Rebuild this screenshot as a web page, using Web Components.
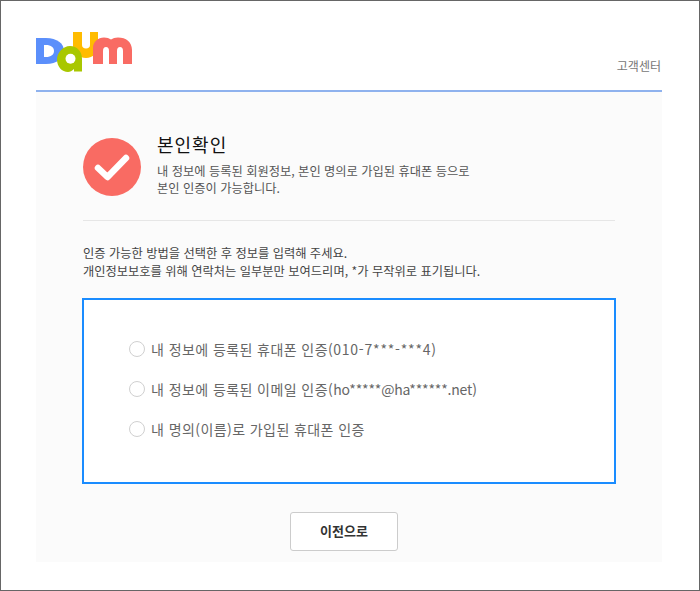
<!DOCTYPE html>
<html lang="ko">
<head>
<meta charset="utf-8">
<title>본인확인</title>
<style>
html,body{margin:0;padding:0;background:#fff;}
body{width:700px;height:591px;font-family:"Noto Sans CJK KR","Liberation Sans",sans-serif;}
.phone{letter-spacing:.8px;}
.mail{letter-spacing:-.18px;}
</style>
</head>
<body>
<page-frame>
  <daum-header slot="header"></daum-header>
  <identity-intro></identity-intro>
  <method-box>
    <method-radio>내 정보에 등록된 휴대폰 인증(<span class="phone">010-7***-***4</span>)</method-radio>
    <method-radio>내 정보에 등록된 이메일 인증(<span class="mail">ho*****@ha******.net</span>)</method-radio>
    <method-radio>내 명의(이름)로 가입된 휴대폰 인증</method-radio>
  </method-box>
  <back-button>이전으로</back-button>
</page-frame>

<script>
function define(name,html){
    customElements.define(name,class extends HTMLElement{
        constructor(){
            super();
            this.attachShadow({mode:'open'}).innerHTML=html;
        }
    });
}

define('page-frame',`
<style>
:host{display:block;box-sizing:border-box;width:700px;height:591px;border:1px solid #666;padding:0 37px 0 35px;overflow:hidden;}
.panel{background:#fbfbfb;height:470px;padding:46px 47px 0 47px;box-sizing:border-box;}
</style>
<slot name="header"></slot>
<div class="panel"><slot></slot></div>
`);

define('daum-header',`
<style>
:host{display:flex;justify-content:space-between;align-items:flex-end;box-sizing:border-box;height:91px;border-bottom:2px solid #8fb2ee;padding:31px 1px 16px 0;}
svg{display:block;align-self:flex-start;}
span{font-size:12px;line-height:16px;color:#777;}
</style>
<svg width="98" height="42" viewBox="36 32 98 42">
  <path d="M36 38h10c11 0 18 5.500 18 13s-7 13-18 13H36z" fill="#5b8ffb"/>
  <path d="M44 45v12h2c5 0 8-2.500 8-6s-3-6-8-6z" fill="#fff"/>
  <path d="M73 32h9v13c0 2 1.500 3.500 4 3.500s4-1.500 4-3.500V32h8v14c0 7-5 12-12 12s-13-5-13-12z" fill="#ffbc00"/>
  <path d="M93 64V48c0-6 5-10.500 11-10.500 3 0 5 .800 7 2 2-1.200 4-2 7-2 8 0 14 4.500 14 12.500v14h-9V51c0-2.500-1-4-3-4s-3 1.500-3 4v13h-8V51c0-2.500-1-4-3-4s-3 1.500-3 4v13z" fill="#f96b63"/>
  <path d="M70 46c7 0 12 5.500 12 12.500v13h-8V69c-2 2-4 3-6 3-6 0-11-5.500-11-12.500S63 46 70 46z" fill="#a9c700"/>
  <circle cx="70.500" cy="58.800" r="5" fill="#fff"/>
</svg>
<span>고객센터</span>
`);

define('identity-intro',`
<style>
:host{display:block;}
.top{display:flex;gap:16px;height:83px;border-bottom:1px solid #e6e6e6;box-sizing:border-box;}
svg{display:block;flex:none;}
h1{margin:-6px 0 0;font-size:18px;line-height:24px;letter-spacing:1px;font-weight:400;color:#111;}
.sub{margin:7px 0 0;font-size:12.250px;line-height:17px;color:#555;}
.guide{margin:23px 0 0;font-size:12.250px;line-height:18px;color:#444;}
</style>
<div class="top">
  <svg width="58" height="59" viewBox="0 0 58 59">
    <circle cx="29" cy="29" r="29" fill="#f96b63"/>
    <path d="M15 30l9.500 9L43 20" fill="none" stroke="#fff" stroke-width="6.500" stroke-linecap="round" stroke-linejoin="round"/>
  </svg>
  <div>
    <h1>본인확인</h1>
    <p class="sub">내 정보에 등록된 회원정보, 본인 명의로 가입된 휴대폰 등으로<br>본인 인증이 가능합니다.</p>
  </div>
</div>
<p class="guide">인증 가능한 방법을 선택한 후 정보를 입력해 주세요.<br>개인정보보호를 위해 연락처는 일부분만 보여드리며, *가 무작위로 표기됩니다.</p>
`);

define('method-box',`
<style>
:host{display:flex;flex-direction:column;gap:20px;box-sizing:border-box;width:534px;height:186px;margin:18px 0 0 -1px;padding:39px 0 0 45px;background:#fff;border:2px solid #1a8cff;}
</style>
<slot></slot>
`);

define('method-radio',`
<style>
:host{display:flex;align-items:center;gap:6px;height:20px;font-size:14px;letter-spacing:.42px;line-height:20px;color:#666;}
i{display:block;flex:none;box-sizing:border-box;width:16px;height:16px;border:1.500px solid #d0d0d0;border-radius:50%;background:#fff;}
</style>
<i></i><span><slot></slot></span>
`);

define('back-button',`
<style>
:host{display:block;box-sizing:border-box;width:108px;height:39px;margin:28px 0 0 207px;border:1.500px solid #ccc;border-radius:3px;background:#fff;text-align:center;font-size:13px;font-weight:700;line-height:36px;color:#333;}
</style>
<slot></slot>
`);
</script>
</body>
</html>
